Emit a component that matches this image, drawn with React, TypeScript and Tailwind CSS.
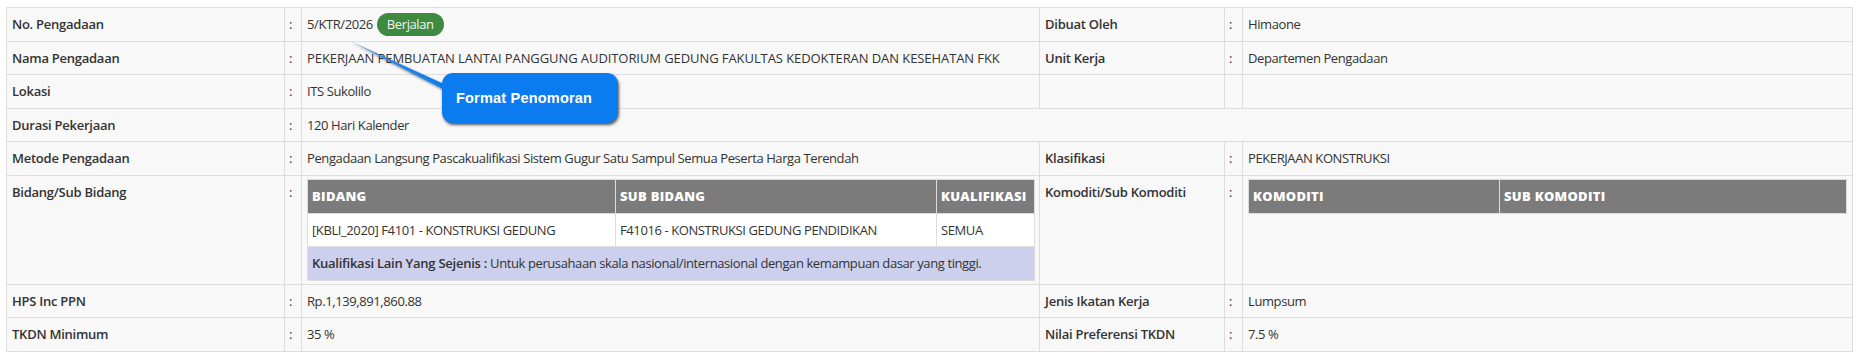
import React from "react";

const label = "border border-[#dddddd] px-[5px] py-[7px] align-top font-semibold tracking-[-0.25px] text-[#333333]";
const colon = "border border-[#dddddd] pl-[4px] pr-0 py-[7px] text-left align-top text-[#333333]";
const value = "border border-[#dddddd] px-[5px] py-[7px] align-top text-[#333333]";
const th = "border border-[#dddddd] bg-[#7b7b7b] px-[4px] py-[7px] text-left font-extrabold uppercase tracking-[0.3px] text-white";
const td = "border border-[#dddddd] bg-white px-[4px] py-[7px] text-[#333333]";

function Callout() {
  return (
    <>
      <svg className="pointer-events-none absolute left-[334px] top-[27px] h-[70px] w-[110px] overflow-visible" viewBox="0 0 110 70">
        <defs>
          <linearGradient id="wedge" x1="0" y1="0" x2="1" y2="1">
            <stop offset="0" stopColor="#8aa3bb" />
            <stop offset="0.35" stopColor="#2f86e0" />
            <stop offset="1" stopColor="#0b7cf0" />
          </linearGradient>
          <filter id="sh" x="-20%" y="-20%" width="140%" height="160%">
            <feDropShadow dx="1" dy="1.5" stdDeviation="0.8" floodColor="#000" floodOpacity="0.55" />
          </filter>
        </defs>
        <polygon points="10,7 104,50 104,55.5" fill="url(#wedge)" filter="url(#sh)" />
      </svg>
      <div className="absolute left-[436px] top-[66px] flex h-[50px] w-[176px] items-center rounded-[11px] bg-[#0b7cf0] pl-[14px] font-['Liberation_Sans',Arial,sans-serif] text-[14.5px] font-bold tracking-[0.2px] text-white shadow-[1px_2px_3px_rgba(0,0,0,0.65)]">
        Format Penomoran
      </div>
    </>
  );
}

export default function App() {
  return (
    <div className="min-h-[356px] bg-white pl-[6px] pt-[7px] font-['Open_Sans',sans-serif] text-[13px] leading-[18.6px] tracking-[-0.4px]">
      <div className="relative w-[1846px]">
        <table className="w-[1846px] table-fixed border-collapse border border-[#cccccc] bg-[#f8f8f8]">
          <colgroup>
            <col className="w-[278px]" />
            <col className="w-[17px]" />
            <col className="w-[738px]" />
            <col className="w-[185px]" />
            <col className="w-[18px]" />
            <col className="w-[610px]" />
          </colgroup>
          <tbody>
            <tr>
              <td className={label}>No. Pengadaan</td>
              <td className={colon}>:</td>
              <td className={value}>
                5/KTR/2026{" "}
                <span className="-my-[3px] ml-[1px] inline-block rounded-full bg-[#3d8a40] px-[10px] py-[2px] text-[#f2f2f2]">
                  Berjalan
                </span>
              </td>
              <td className={label}>Dibuat Oleh</td>
              <td className={colon}>:</td>
              <td className={value}>Himaone</td>
            </tr>
            <tr>
              <td className={label}>Nama Pengadaan</td>
              <td className={colon}>:</td>
              <td className={`${value} tracking-[-0.08px]`}>
                PEKERJAAN PEMBUATAN LANTAI PANGGUNG AUDITORIUM GEDUNG FAKULTAS KEDOKTERAN DAN KESEHATAN FKK
              </td>
              <td className={label}>Unit Kerja</td>
              <td className={colon}>:</td>
              <td className={value}>Departemen Pengadaan</td>
            </tr>
            <tr>
              <td className={label}>Lokasi</td>
              <td className={colon}>:</td>
              <td className={value}>ITS Sukolilo</td>
              <td className={label}></td>
              <td className={colon}></td>
              <td className={value}></td>
            </tr>
            <tr>
              <td className={label}>Durasi Pekerjaan</td>
              <td className={colon}>:</td>
              <td className={value} colSpan={4}>
                120 Hari Kalender
              </td>
            </tr>
            <tr>
              <td className={label}>Metode Pengadaan</td>
              <td className={colon}>:</td>
              <td className={value}>
                Pengadaan Langsung Pascakualifikasi Sistem Gugur Satu Sampul Semua Peserta Harga Terendah
              </td>
              <td className={label}>Klasifikasi</td>
              <td className={colon}>:</td>
              <td className={value}>PEKERJAAN KONSTRUKSI</td>
            </tr>
            <tr>
              <td className={label}>Bidang/Sub Bidang</td>
              <td className={colon}>:</td>
              <td className="border border-[#dddddd] px-[5px] pb-[3px] pt-[3px] align-top">
                <table className="w-full table-fixed border-collapse border border-[#dddddd]">
                  <colgroup>
                    <col className="w-[308px]" />
                    <col className="w-[321px]" />
                    <col className="w-[98px]" />
                  </colgroup>
                  <thead>
                    <tr>
                      <th className={th}>Bidang</th>
                      <th className={th}>Sub Bidang</th>
                      <th className={th}>Kualifikasi</th>
                    </tr>
                  </thead>
                  <tbody>
                    <tr>
                      <td className={td}>[KBLI_2020] F4101 - KONSTRUKSI GEDUNG</td>
                      <td className={td}>F41016 - KONSTRUKSI GEDUNG PENDIDIKAN</td>
                      <td className={td}>SEMUA</td>
                    </tr>
                    <tr>
                      <td className="border border-[#dddddd] bg-[#cdd0ed] px-[4px] py-[7px] text-[#333333]" colSpan={3}>
                        <span className="font-semibold tracking-[-0.25px]">Kualifikasi Lain Yang Sejenis :</span> Untuk perusahaan skala
                        nasional/internasional dengan kemampuan dasar yang tinggi.
                      </td>
                    </tr>
                  </tbody>
                </table>
              </td>
              <td className={label}>Komoditi/Sub Komoditi</td>
              <td className={colon}>:</td>
              <td className="border border-[#dddddd] px-[5px] pb-[3px] pt-[3px] align-top">
                <table className="w-full table-fixed border-collapse border border-[#dddddd]">
                  <colgroup>
                    <col className="w-[251px]" />
                    <col />
                  </colgroup>
                  <thead>
                    <tr>
                      <th className={th}>Komoditi</th>
                      <th className={th}>Sub Komoditi</th>
                    </tr>
                  </thead>
                </table>
              </td>
            </tr>
            <tr>
              <td className={label}>HPS Inc PPN</td>
              <td className={colon}>:</td>
              <td className={value}>Rp.1,139,891,860.88</td>
              <td className={label}>Jenis Ikatan Kerja</td>
              <td className={colon}>:</td>
              <td className={value}>Lumpsum</td>
            </tr>
            <tr>
              <td className={label}>TKDN Minimum</td>
              <td className={colon}>:</td>
              <td className={value}>35 %</td>
              <td className={label}>Nilai Preferensi TKDN</td>
              <td className={colon}>:</td>
              <td className={value}>7.5 %</td>
            </tr>
          </tbody>
        </table>
        <Callout />
      </div>
    </div>
  );
}
